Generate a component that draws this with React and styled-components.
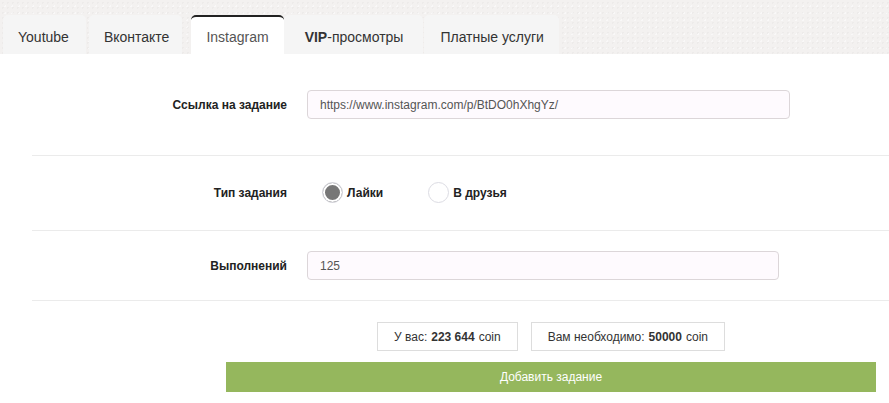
import styled, { createGlobalStyle } from "styled-components";

const GlobalStyle = createGlobalStyle`
  body {
    margin: 0;
    background: #fff;
    font-family: "Liberation Sans", Arial, sans-serif;
    color: #333;
  }
`
const Header = styled.div`
  display: flex;
  align-items: flex-end;
  height: 54px;
  padding-left: 3px;
  background-color: #f3f1f0;
  background-image:
    radial-gradient(rgba(0,0,0,0.025) 1px, transparent 1px),
    radial-gradient(rgba(255,255,255,0.5) 1px, transparent 1px);
  background-size: 5px 5px, 7px 7px;
  background-position: 0 0, 2px 3px;
`
const Tab = styled.div`
  height: 39px;
  box-sizing: border-box;
  padding: 3px ${props => props.$pr}px 0 ${props => props.$pl}px;
  margin-right: ${props => props.$gap}px;
  display: flex;
  align-items: center;
  font-size: 14px;
  color: ${props => props.$active ? "#555" : "#333"};
  background: ${props => props.$active ? "#fff" : "#f5f5f5"};
  border-top: 2px solid ${props => props.$active ? "#222" : "transparent"};
  border-radius: 5px 5px 0 0;
  cursor: pointer;

  b {
    font-weight: 700;
  }
`
const Form = styled.div`
  padding-left: 32px;
`
const Row = styled.div`
  display: grid;
  grid-template-columns: 255px 1fr;
  column-gap: 20px;
  align-items: center;
  padding: ${props => props.$pad};
  border-bottom: 1px solid #ebebeb;
`
const Label = styled.div`
  text-align: right;
  font-size: 12px;
  font-weight: 700;
  color: #222;
`
const Input = styled.input`
  box-sizing: border-box;
  width: ${props => props.$w}px;
  height: 29px;
  padding: 0 12px;
  border: 1px solid #dcd6d9;
  border-radius: 4px;
  background: #fefafe;
  font-family: inherit;
  font-size: 12px;
  color: #555;
  outline: none;
`
const Radios = styled.div`
  display: flex;
  align-items: center;
  padding-left: 15px;
`
const Option = styled.label`
  display: flex;
  align-items: center;
  gap: 4px;
  margin-right: 45px;
  font-size: 12px;
  font-weight: 700;
  color: #222;
  cursor: pointer;
`
const Dot = styled.span`
  box-sizing: border-box;
  width: 21px;
  height: 21px;
  border-radius: 50%;
  border: 1px solid #dcdce3;
  background: ${props => props.$on ? "#777" : "#fff"};
  box-shadow: inset 0 0 0 2px #fff;
`
const Summary = styled.div`
  width: 650px;
  margin-left: 226px;
  padding-top: 21px;
`
const Coins = styled.div`
  display: flex;
  justify-content: center;
  gap: 13px;
`
const Coin = styled.div`
  box-sizing: border-box;
  height: 29px;
  padding: 0 16px;
  display: flex;
  align-items: center;
  border: 1px solid #ddd;
  font-size: 12px;
  color: #333;

  b {
    margin: 0 4px;
  }
`
const Button = styled.button`
  display: block;
  width: 100%;
  height: 30px;
  margin-top: 11px;
  border: none;
  background: #95b75d;
  color: #fff;
  font-family: inherit;
  font-size: 12px;
  cursor: pointer;
`

const App = () => {
  return (
    <>
      <GlobalStyle />
      <Header>
        <Tab $pl={15} $pr={17} $gap={3}>Youtube</Tab>
        <Tab $pl={15} $pr={13} $gap={9}>Вконтакте</Tab>
        <Tab $active $pl={15} $pr={15} $gap={0}>Instagram</Tab>
        <Tab $pl={21} $pr={20} $gap={1}><b>VIP</b>-просмотры</Tab>
        <Tab $pl={16} $pr={15} $gap={0}>Платные услуги</Tab>
      </Header>
      <Form>
        <Row $pad="36px 0 36px">
          <Label>Ссылка на задание</Label>
          <Input $w={483} defaultValue="https://www.instagram.com/p/BtDO0hXhgYz/" />
        </Row>
        <Row $pad="26px 0 27px">
          <Label>Тип задания</Label>
          <Radios>
            <Option><Dot $on />Лайки</Option>
            <Option><Dot />В друзья</Option>
          </Radios>
        </Row>
        <Row $pad="20px 0 20px">
          <Label>Выполнений</Label>
          <Input $w={472} defaultValue="125" />
        </Row>
      </Form>
      <Summary>
        <Coins>
          <Coin>У вас:<b>223 644</b>coin</Coin>
          <Coin>Вам необходимо:<b>50000</b>coin</Coin>
        </Coins>
        <Button>Добавить задание</Button>
      </Summary>
    </>
  )
}

export default App;
